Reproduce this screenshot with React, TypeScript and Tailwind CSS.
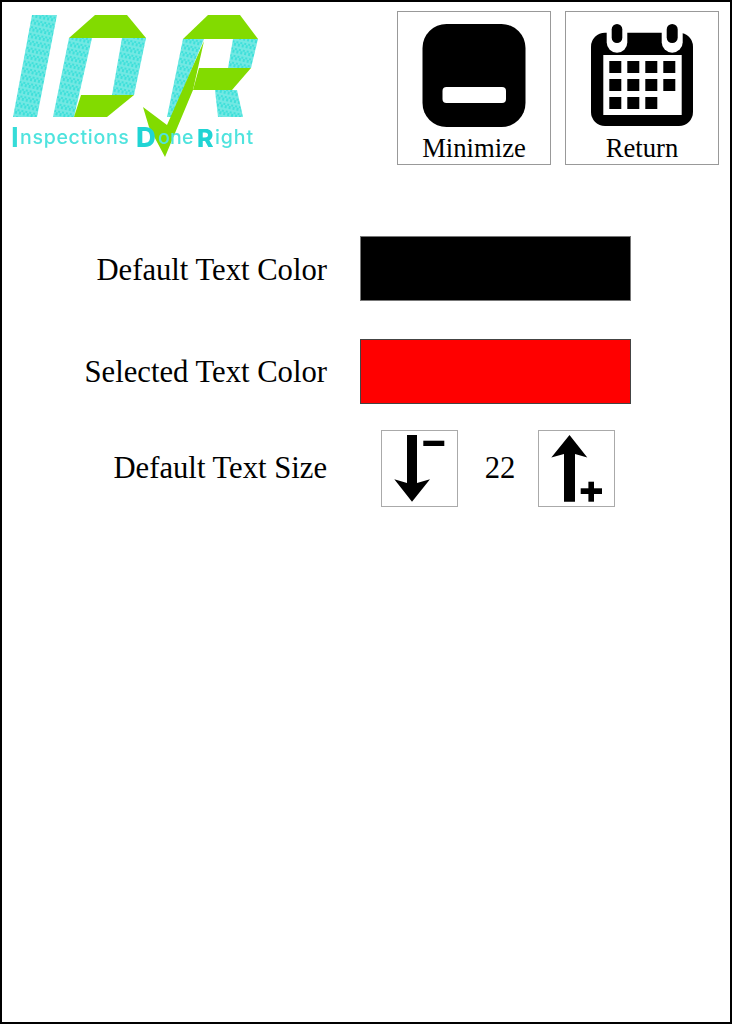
function Logo() {
  return (
    <svg width="258" height="158" viewBox="0 0 258 158" className="blur-[0.5px]">
      <defs>
        <pattern id="hatch" width="4" height="7" patternUnits="userSpaceOnUse" patternTransform="rotate(12)">
          <rect width="4" height="7" fill="#3fe0da" />
          <path d="M1 0 L1 5" stroke="#a5f0ec" strokeWidth="1" />
          <path d="M3 3 L3 7" stroke="#a5f0ec" strokeWidth="1" />
        </pattern>
      </defs>
      <g fill="url(#hatch)">
        <polygon points="32,15 57,15 37,117 13,117" />
        <polygon points="69,38 92,38 74,117 53,117" />
        <polygon points="122,38 146,38 134,95 112,95" />
        <polygon points="183,39 204,39 172,117 167,117" />
        <polygon points="233,39 258,39 251,68 228,68" />
        <polygon points="215,90 237,90 243,117 218,117" />
      </g>
      <g fill="#82db00">
        <polygon points="95,15 127,15 146,38 69,38" />
        <polygon points="81,95 134,95 107,117 74,117" />
        <polygon points="208,15 240,15 258,39 183,39" />
        <polygon points="199,68 251,68 232,90 193,90" />
        <polygon points="143,107 167,125 204,41 193,90 165,157 149,127" />
      </g>
      <text fontSize="19.5" fontWeight="500" fill="#4fe3de" fontFamily="Inter, sans-serif">
        <tspan x="11" y="147" fontSize="27.5" fontWeight="700" fill="#35dcd8">I</tspan>
        <tspan x="20" y="144" letterSpacing="0.7">{"nspections "}</tspan>
        <tspan x="136" y="147" fontSize="27.5" fontWeight="800" fill="#20d4d4">D</tspan>
        <tspan x="158" y="144" letterSpacing="0.2">{"one "}</tspan>
        <tspan x="197" y="147" fontSize="25" fontWeight="800" fill="#20d4d4">R</tspan>
        <tspan x="215" y="144" letterSpacing="0.9">ight</tspan>
      </text>
    </svg>
  );
}

function MinimizeIcon() {
  return (
    <svg width="104" height="103" viewBox="0 0 104 103">
      <rect x="0.5" y="0" width="103" height="103" rx="24" fill="#000" />
      <rect x="20.5" y="63" width="63.5" height="16" rx="4" fill="#fff" />
    </svg>
  );
}

function CalendarIcon() {
  const xs = [18.3, 36.3, 54.3, 72.3];
  const ys = [37, 55, 73];
  return (
    <svg width="102" height="103" viewBox="0 0 102 103">
      <rect x="0" y="8.7" width="102" height="93.3" rx="14" fill="#000" />
      <rect x="12.3" y="31" width="78.4" height="60" fill="#fff" />
      <rect x="15.7" y="-4" width="20.6" height="32.7" rx="10.3" fill="#fff" />
      <rect x="70.7" y="-4" width="21" height="32.7" rx="10.5" fill="#fff" />
      <rect x="20.7" y="0" width="10.6" height="19" rx="5.3" fill="#000" />
      <rect x="75.7" y="0" width="11" height="19" rx="5.5" fill="#000" />
      {ys.map((y, r) =>
        xs.slice(0, r === 2 ? 3 : 4).map((x) => <rect key={`${x}-${y}`} x={x} y={y} width="12" height="12" fill="#000" />),
      )}
    </svg>
  );
}

function ArrowDown() {
  return (
    <svg width="75" height="75" viewBox="1 1 75 75">
      <polygon points="26,5 36,5 36,53 49,49.3 31,71.7 13.3,49.3 26,53" fill="#000" />
      <rect x="42.3" y="10.7" width="21" height="5.3" fill="#000" />
    </svg>
  );
}

function ArrowUp() {
  return (
    <svg width="75" height="75" viewBox="1 1 75 75">
      <polygon points="31.5,5 49.3,27.5 37,24 37,71.7 26,71.7 26,24 13.3,27.5" fill="#000" />
      <rect x="42.7" y="58.3" width="21.3" height="5.7" fill="#000" />
      <rect x="50.4" y="51.7" width="5.6" height="20" fill="#000" />
    </svg>
  );
}

function TopButton({ label, children }: { label: string; children: React.ReactNode }) {
  return (
    <button className="flex flex-col items-center w-[154px] h-[154px] border border-[#999] pt-[12px]">
      {children}
      <span className="text-[26.67px] leading-[30px] mt-[6px]">{label}</span>
    </button>
  );
}

export default function App() {
  return (
    <div className="w-[732px] h-[1024px] border-2 border-black bg-white text-black font-['Liberation_Serif',serif]">
      <div className="flex justify-between h-[163px] pr-[11px] pt-[9px]">
        <div className="-mt-[11px] -ml-[2px]">
          <Logo />
        </div>
        <div className="flex gap-[14px]">
          <TopButton label="Minimize">
            <MinimizeIcon />
          </TopButton>
          <TopButton label="Return">
            <CalendarIcon />
          </TopButton>
        </div>
      </div>

      <div className="flex items-center mt-[71px]">
        <div className="w-[325px] text-right text-[30.67px] leading-none mt-[4px]">Default Text Color</div>
        <button className="ml-[33px] w-[271px] h-[65px] bg-black border border-[#777]" />
      </div>
      <div className="flex items-center mt-[38px]">
        <div className="w-[325px] text-right text-[30.67px] leading-none mt-[2px]">Selected Text Color</div>
        <button className="ml-[33px] w-[271px] h-[65px] bg-[#ff0000] border border-[#444]" />
      </div>
      <div className="flex items-center mt-[26px]">
        <div className="w-[325px] text-right text-[30.67px] leading-none">Default Text Size</div>
        <button className="ml-[54px] w-[77px] h-[77px] border border-[#aaa]">
          <ArrowDown />
        </button>
        <div className="w-[80px] pl-[4px] text-center text-[30.67px] leading-none">22</div>
        <button className="w-[77px] h-[77px] border border-[#aaa]">
          <ArrowUp />
        </button>
      </div>
    </div>
  );
}
